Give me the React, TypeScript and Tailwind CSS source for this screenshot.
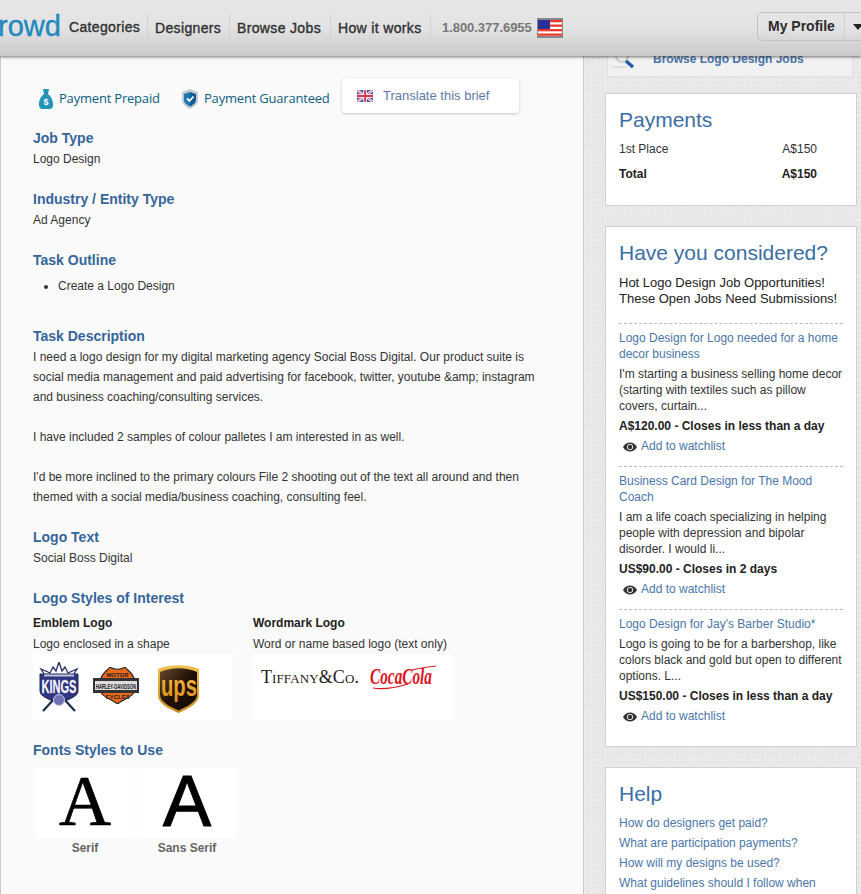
import React from "react";

const H = ({ children, className = "" }: { children: React.ReactNode; className?: string }) => (
  <h3 className={`text-[14px] leading-[20px] font-bold text-[#35659a] ${className}`}>{children}</h3>
);

const Eye = () => (
  <svg width="14" height="10" viewBox="0 0 14 10" className="mr-[4px] mt-[4px] shrink-0">
    <path d="M0 5C2 1.500 4.500 .5 7 .5S12 1.500 14 5c-2 3.500-4.500 4.500-7 4.500S2 8.500 0 5z" fill="#333" />
    <circle cx="7" cy="5" r="3" fill="#fff" />
    <circle cx="7" cy="5" r="2.200" fill="#333" />
  </svg>
);

const UsFlag = () => (
  <svg width="26" height="20" viewBox="0 0 26 20" className="ml-[5px] shrink-0">
    <rect width="26" height="20" fill="#888" />
    <rect x="1" y="2" width="24" height="16" fill="#fff" />
    {[2, 6.5, 11, 15.5].map((y) => (
      <rect key={y} x="1" y={y} width="24" height="2.300" fill="#e8392c" />
    ))}
    <rect x="1" y="2" width="12" height="9" fill="#2b2f96" />
  </svg>
);

const UkFlag = () => (
  <svg width="16" height="12" viewBox="0 0 16 12" className="shrink-0">
    <rect width="16" height="12" fill="#3f4f9b" />
    <path d="M0 0L16 12M16 0L0 12" stroke="#fff" strokeWidth="2.500" />
    <path d="M0 0L16 12M16 0L0 12" stroke="#d8586c" strokeWidth="1" />
    <path d="M8 0V12M0 6H16" stroke="#fff" strokeWidth="3.500" />
    <path d="M8 0V12M0 6H16" stroke="#d23a50" strokeWidth="1.800" />
  </svg>
);

const Kings = () => (
  <svg width="42" height="50" viewBox="0 0 42 50" className="shrink-0">
    <path d="M8 15L3 7L12 11L15 5L18 9L21 0L24 9L27 5L30 11L39 7L34 15z" fill="#fff" stroke="#2b3268" strokeWidth="1.300" />
    <path d="M2 12H40V29C40 35 30 37 21 42C12 37 2 35 2 29z" fill="#2f3580" stroke="#1d2a4d" strokeWidth="1" />
    <path d="M6 13.500H36" stroke="#c3c6e0" strokeWidth="2" />
    <text x="21" y="31" textAnchor="middle" fontFamily="Liberation Sans" fontWeight="700" fontSize="18" fill="#fff" stroke="#c9cce6" strokeWidth=".3" textLength="35" lengthAdjust="spacingAndGlyphs">KINGS</text>
    <path d="M5 49L17 36M37 49L25 36" stroke="#1d2a4d" strokeWidth="2.200" />
    <circle cx="21" cy="38" r="5.500" fill="#6c70b5" stroke="#c9cce6" />
  </svg>
);

const Harley = () => (
  <svg width="49" height="37" viewBox="0 0 49 37" className="shrink-0">
    <path d="M8 12C9 6 14 4 17 0C21 3 28 3 32 0C35 4 40 6 41 12z" fill="#e8691c" stroke="#222" strokeWidth="1.200" />
    <path d="M8 25C9 30 19 32 24.500 37C30 32 40 30 41 25z" fill="#e8691c" stroke="#222" strokeWidth="1.200" />
    <rect x="0" y="11" width="46" height="15" fill="#333" />
    <rect x="2" y="14" width="42" height="9" fill="#ddd" />
    <text x="23" y="21.500" textAnchor="middle" fontFamily="Liberation Sans" fontWeight="700" fontSize="8" fill="#222" textLength="40" lengthAdjust="spacingAndGlyphs">HARLEY-DAVIDSON</text>
    <text x="24.500" y="9.500" textAnchor="middle" fontFamily="Liberation Sans" fontWeight="700" fontSize="6" fill="#222">MOTOR</text>
    <text x="24.500" y="32" textAnchor="middle" fontFamily="Liberation Sans" fontWeight="700" fontSize="6" fill="#222">CYCLES</text>
  </svg>
);

const Ups = () => (
  <svg width="41" height="49" viewBox="0 0 41 49" className="shrink-0">
    <defs>
      <linearGradient id="upsg" x1="0" y1="0" x2="0" y2="1">
        <stop offset="0" stopColor="#eec153" />
        <stop offset="1" stopColor="#c98a1c" />
      </linearGradient>
      <linearGradient id="upsd" x1="0" y1="0" x2="1" y2="1">
        <stop offset="0" stopColor="#6b4a2a" />
        <stop offset=".5" stopColor="#1e1006" />
        <stop offset="1" stopColor="#120903" />
      </linearGradient>
      <linearGradient id="upst" x1="0" y1="0" x2="0" y2="1">
        <stop offset="0" stopColor="#f7c04a" />
        <stop offset="1" stopColor="#dd8c1c" />
      </linearGradient>
    </defs>
    <path d="M0 5C12 0 29 0 41 5V31C41 40 29 45 20.500 49C12 45 0 40 0 31z" fill="url(#upsg)" />
    <path d="M2 8C14 3 27 3 39 8V31C39 38 28 43 20.500 46.500C13 43 2 38 2 31z" fill="url(#upsd)" />
    <text x="21" y="32" textAnchor="middle" fontFamily="Liberation Sans" fontWeight="700" fontSize="29" fill="url(#upst)" textLength="36" lengthAdjust="spacingAndGlyphs">ups</text>
  </svg>
);

const Coke = () => (
  <svg width="67" height="26" viewBox="0 0 67 26" className="shrink-0">
    <text x="0" y="19" fontFamily="Liberation Serif" fontStyle="italic" fontWeight="700" fontSize="23" fill="#e3141e" textLength="62" lengthAdjust="spacingAndGlyphs">CocaCola</text>
    <path d="M3 23C14 25 28 22 38 19" fill="none" stroke="#e3141e" strokeWidth="1.200" />
    <path d="M42 5C50 3 58 2 66 1" fill="none" stroke="#e3141e" strokeWidth="1" />
  </svg>
);

const Job = ({ title, desc, price }: { title: React.ReactNode; desc: React.ReactNode; price: string }) => (
  <div className="border-t border-dashed border-[#bbb] pt-[6px] pb-[12px]">
    <a className="block text-[#4a76a8] leading-[16px]">{title}</a>
    <p className="mt-[4px] leading-[16px] text-[#333]">{desc}</p>
    <p className="mt-[4px] leading-[16px] font-bold text-[#222]">{price}</p>
    <div className="mt-[4px] pl-[4px] flex leading-[16px] text-[#4a76a8]">
      <Eye />
      Add to watchlist
    </div>
  </div>
);

export default function App() {
  return (
    <div className="relative h-[894px] w-[861px] overflow-hidden bg-[#e9e9e9] bg-[radial-gradient(#e3e3e3_1px,transparent_1px),radial-gradient(#eeeeee_1px,transparent_1px)] bg-[length:5px_5px,7px_7px] text-[12px] text-[#333] font-['Liberation_Sans',Arial,sans-serif]">
      <header className="absolute top-0 left-0 z-10 flex h-[56px] w-[861px] items-center overflow-hidden bg-gradient-to-b from-[#e6e6e6] via-[#e3e3e3] to-[#c9c9c9] shadow-[0_1px_3px_rgba(0,0,0,0.55)]">
        <span className="ml-[-2px] w-[71px] shrink-0 text-[29px] leading-[40px] mb-[5px] text-[#2388bd] [-webkit-text-stroke:0.4px_#2388bd]">rowd</span>
        <nav className="flex h-[28px] shrink-0 items-center text-[14px] text-[#333] mb-[1px] tracking-[0.35px] [-webkit-text-stroke:0.4px_#333]">
          <span className="w-[78px]">Categories</span>
          <span className="w-[82px] border-l border-[#d2d2d2] pl-[7px] leading-[28px]">Designers</span>
          <span className="w-[101px] border-l border-[#d2d2d2] pl-[7px] leading-[28px]">Browse Jobs</span>
          <span className="w-[100px] border-l border-[#d2d2d2] pl-[7px] leading-[28px]">How it works</span>
          <span className="h-[28px] border-l border-[#d2d2d2]" />
        </nav>
        <span className="ml-[11px] shrink-0 text-[13px] font-bold text-[#777] tracking-[-0.05px]">1.800.377.6955</span>
        <UsFlag />
        <div className="ml-auto flex h-[29px] w-[104px] shrink-0 items-center rounded-l-[5px] border border-r-0 border-[#c4c4c4] mb-[3px] text-[14px] font-bold text-[#2b2b2b]">
          <span className="w-[87px] shrink-0 pl-[10px] leading-[27px] border-r border-[#cfcfcf]">My Profile</span>
          <span className="ml-[8px] h-0 w-0 shrink-0 border-x-[5px] border-t-[6px] border-x-transparent border-t-[#222]" />
        </div>
      </header>

      <div className="flex h-[894px]">
        <main className="h-[894px] w-[584px] shrink-0 border-x border-[#c8c8c8] bg-[#fafafa] pt-[78px] pl-[32px]">
          <div className="flex h-[35px] items-center">
            <span className="ml-[6px] flex w-[143px] shrink-0 items-center pt-[6px] font-['Open_Sans',sans-serif] text-[13px] tracking-[-0.2px] text-[#0f5e80]">
              <svg width="14" height="20" viewBox="0 0 14 20" className="mr-[6px] shrink-0">
                <path d="M4 0H10L9 5H5z M5 5H9C13 8 14 12 14 16C14 19 12 20 11 20H3C2 20 0 19 0 16C0 12 1 8 5 5z" fill="#2294b8" />
                <text x="7" y="16" textAnchor="middle" fontSize="9" fontWeight="700" fill="#fff" fontFamily="Liberation Sans">$</text>
              </svg>
              Payment Prepaid
            </span>
            <span className="flex w-[160px] shrink-0 items-center whitespace-nowrap pt-[6px] font-['Open_Sans',sans-serif] text-[13px] tracking-[-0.2px] text-[#0f5e80]">
              <svg width="16" height="20" viewBox="0 0 16 20" className="mr-[6px] shrink-0">
                <path d="M8 0L16 3V11C16 15 12 18 8 20C4 18 0 15 0 11V3z" fill="#c3c9cc" />
                <path d="M8 3L14 5V11C14 14 11 16 8 17.500z" fill="#115c92" />
                <path d="M8 3L2 5V11C2 14 5 16 8 17.500z" fill="#1b78b8" />
                <path d="M5 9.500L7.500 12L11.500 7.500" stroke="#fff" strokeWidth="1.800" fill="none" />
              </svg>
              Payment Guaranteed
            </span>
            <div className="flex h-[35px] w-[177px] items-center rounded-[4px] bg-white pl-[15px] pt-[1px] text-[13px] text-[#5d79a3] shadow-[0_1px_3px_rgba(0,0,0,0.2)]">
              <UkFlag />
              <span className="ml-[10px]">Translate this brief</span>
            </div>
          </div>

          <H className="mt-[15px]">Job Type</H>
          <p className="mt-[1px] leading-[20px]">Logo Design</p>

          <H className="mt-[20px]">Industry / Entity Type</H>
          <p className="mt-[1px] leading-[20px]">Ad Agency</p>

          <H className="mt-[20px]">Task Outline</H>
          <ul className="mt-[6px] list-disc pl-[25px] leading-[20px]">
            <li>Create a Logo Design</li>
          </ul>

          <H className="mt-[30px]">Task Description</H>
          <div className="mt-[1px] w-[510px] leading-[20px]">
            <p>I need a logo design for my digital marketing agency Social Boss Digital. Our product suite is social media management and paid advertising for facebook, twitter, youtube &amp;amp; instagram and business coaching/consulting services.</p>
            <p className="mt-[20px]">I have included 2 samples of colour palletes I am interested in as well.</p>
            <p className="mt-[20px]">I'd be more inclined to the primary colours File 2 shooting out of the text all around and then themed with a social media/business coaching, consulting feel.</p>
          </div>

          <H className="mt-[20px]">Logo Text</H>
          <p className="mt-[1px] leading-[20px]">Social Boss Digital</p>

          <H className="mt-[20px]">Logo Styles of Interest</H>
          <div className="mt-[5px] flex gap-[20px]">
            <div className="w-[200px]">
              <p className="font-bold leading-[20px] text-[#222]">Emblem Logo</p>
              <p className="mt-[1px] leading-[20px]">Logo enclosed in a shape</p>
              <div className="flex h-[66px] items-start bg-white pl-[5px] pt-[8px]">
                <Kings />
                <span className="ml-[13px] mt-[5px]"><Harley /></span>
                <span className="ml-[16px] mt-[2px]"><Ups /></span>
              </div>
            </div>
            <div className="w-[200px]">
              <p className="font-bold leading-[20px] text-[#222]">Wordmark Logo</p>
              <p className="mt-[1px] leading-[20px]">Word or name based logo (text only)</p>
              <div className="flex h-[66px] items-start bg-white pl-[8px] pt-[11px]">
                <span className="w-[109px] shrink-0 whitespace-nowrap font-['Liberation_Serif',serif] text-[18px] leading-[24px] tracking-[0.1px] text-[#222] [font-variant:small-caps]">Tiffany&amp;Co.</span>
                <Coke />
              </div>
            </div>
          </div>

          <H className="mt-[20px]">Fonts Styles to Use</H>
          <div className="mt-[8px] ml-[2px] flex gap-[2px]">
            <div className="w-[100px] text-center">
              <div className="h-[70px] overflow-hidden bg-white font-['Liberation_Serif',serif] text-[72px] leading-[66px] text-black [-webkit-text-stroke:0.7px_#000]">A</div>
              <p className="mt-[1px] font-bold leading-[18px] text-[#666]">Serif</p>
            </div>
            <div className="w-[100px] text-center">
              <div className="h-[70px] overflow-hidden bg-white text-[72px] leading-[66px] text-black [-webkit-text-stroke:1.2px_#000]">A</div>
              <p className="mt-[1px] font-bold leading-[18px] text-[#666]">Sans Serif</p>
            </div>
          </div>
        </main>

        <aside className="w-[277px] pl-[21px]">
          <div className="ml-[2px] flex h-[77px] w-[246px] items-end border border-[#e0e0e0] bg-[#f1f1f1] pb-[10px] pl-[5px]">
            <svg width="22" height="20" viewBox="0 0 22 20" className="mb-[-2px] shrink-0">
              <circle cx="9" cy="8" r="6" fill="none" stroke="#ccc" strokeWidth="2" />
              <path d="M13 13L20 19" stroke="#1d5f9e" strokeWidth="3.500" />
              <path d="M0 19H14" stroke="#ccc" />
            </svg>
            <span className="ml-[18px] font-bold leading-[14px] text-[#4a76a8]">Browse Logo Design Jobs</span>
          </div>

          <section className="mt-[16px] h-[113px] w-[252px] border border-[#cfcfcf] bg-white px-[13px] pt-[13px]">
            <h2 className="text-[21px] leading-[26px] text-[#3a6ea5]">Payments</h2>
            <div className="mt-[4px] flex justify-between pr-[26px] leading-[24px]"><span>1st Place</span><span>A$150</span></div>
            <div className="mt-[1px] flex justify-between pr-[26px] leading-[24px] font-bold text-[#222]"><span>Total</span><span>A$150</span></div>
          </section>

          <section className="mt-[20px] h-[521px] w-[252px] border border-[#cfcfcf] bg-white px-[13px] pt-[13px]">
            <h2 className="text-[21px] leading-[26px] text-[#3a6ea5]">Have you considered?</h2>
            <p className="mt-[9px] mb-[16px] text-[13px] leading-[16px] text-[#222]">Hot Logo Design Job Opportunities! These Open Jobs Need Submissions!</p>
            <Job title="Logo Design for Logo needed for a home decor business" desc="I'm starting a business selling home decor (starting with textiles such as pillow covers, curtain..." price="A$120.00 - Closes in less than a day" />
            <Job title="Business Card Design for The Mood Coach" desc="I am a life coach specializing in helping people with depression and bipolar disorder. I would li..." price="US$90.00 - Closes in 2 days" />
            <Job title="Logo Design for Jay's Barber Studio*" desc="Logo is going to be for a barbershop, like colors black and gold but open to different options. L..." price="US$150.00 - Closes in less than a day" />
          </section>

          <section className="mt-[20px] h-[200px] w-[252px] border border-[#cfcfcf] bg-white px-[13px] pt-[13px]">
            <h2 className="text-[21px] leading-[26px] text-[#3a6ea5]">Help</h2>
            <div className="mt-[6px] leading-[20px] text-[#4a76a8]">
              <p>How do designers get paid?</p>
              <p>What are participation payments?</p>
              <p>How will my designs be used?</p>
              <p>What guidelines should I follow when</p>
            </div>
          </section>
        </aside>
      </div>
    </div>
  );
}
